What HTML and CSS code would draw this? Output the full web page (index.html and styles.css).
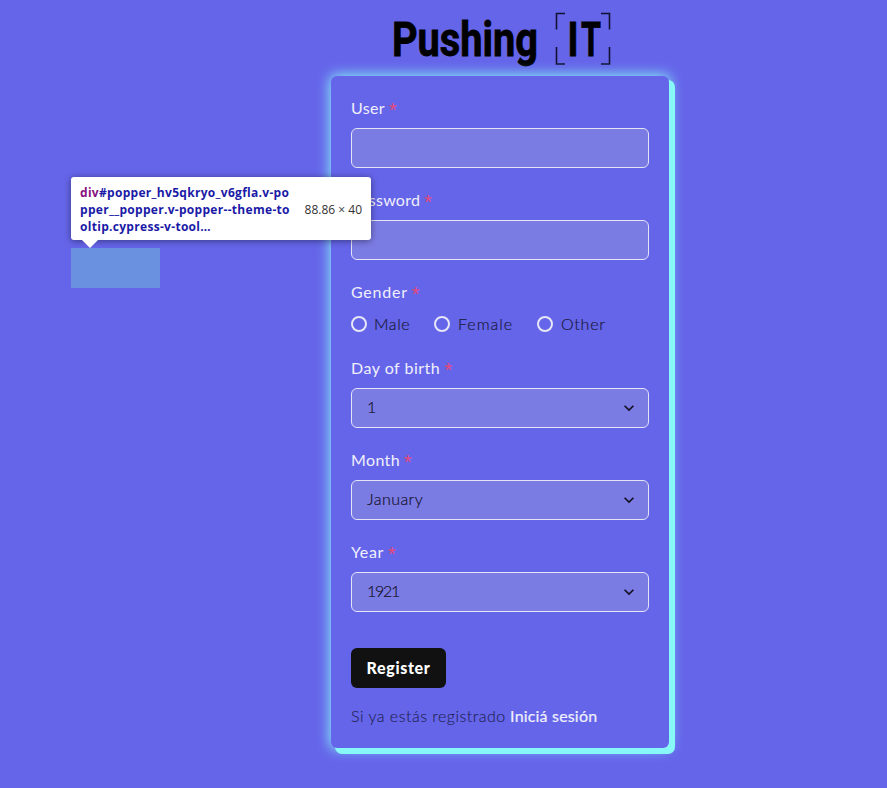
FILE: index.html
```html
<!DOCTYPE html>
<html lang="en">
<head>
<meta charset="utf-8">
<title>Pushing IT</title>
<link rel="stylesheet" href="styles.css">
</head>
<body>
<main class="page">
  <svg class="logo" width="222" height="60" viewBox="0 0 222 60" aria-label="Pushing IT">
    <text class="logo-text" x="3" y="48.500" textLength="146" lengthAdjust="spacingAndGlyphs">Pushing</text>
    <text class="logo-text" x="178.500" y="48.500" textLength="11" lengthAdjust="spacingAndGlyphs">I</text>
    <text class="logo-text" x="192" y="48.500" textLength="20" lengthAdjust="spacingAndGlyphs">T</text>
    <path class="bracket" d="M176 6.500h-8.500v16M212 6.500h8.500v16M167.500 40v17h8.500M220.500 40v17h-8.500"/>
  </svg>
  <form class="card">
    <div class="field">
      <label class="label"><span class="w-user">User</span> <i class="star">*</i></label>
      <div class="control"></div>
    </div>
    <div class="field">
      <label class="label"><span class="w-password">Password</span> <i class="star">*</i></label>
      <div class="control"></div>
    </div>
    <div class="field">
      <label class="label"><span class="w-gender">Gender</span> <i class="star">*</i></label>
      <div class="radios">
        <label class="radio male"><span class="dot"></span><span>Male</span></label>
        <label class="radio female"><span class="dot"></span><span>Female</span></label>
        <label class="radio other"><span class="dot"></span><span>Other</span></label>
      </div>
    </div>
    <div class="field">
      <label class="label"><span class="w-day">Day of birth</span> <i class="star">*</i></label>
      <div class="control"><span>1</span><svg class="chevron" width="20" height="20" viewBox="0 0 24 24"><path d="M16.590 8.590L12 13.170 7.410 8.590 6 10l6 6 6-6z"/></svg></div>
    </div>
    <div class="field">
      <label class="label"><span class="w-month">Month</span> <i class="star">*</i></label>
      <div class="control"><span class="w-january">January</span><svg class="chevron" width="20" height="20" viewBox="0 0 24 24"><path d="M16.590 8.590L12 13.170 7.410 8.590 6 10l6 6 6-6z"/></svg></div>
    </div>
    <div class="field">
      <label class="label"><span class="w-year">Year</span> <i class="star">*</i></label>
      <div class="control"><span class="w-1921">1921</span><svg class="chevron" width="20" height="20" viewBox="0 0 24 24"><path d="M16.590 8.590L12 13.170 7.410 8.590 6 10l6 6 6-6z"/></svg></div>
    </div>
    <button class="submit" type="button">Register</button>
    <p class="signin"><span class="hint">Si ya estás registrado</span> <a class="link">Iniciá sesión</a></p>
  </form>
</main>
<div class="highlight"></div>
<div class="tooltip">
  <div class="selector"><span class="tag">div</span>#popper_hv5qkryo_v6gfla.v-po<br>pper__popper.v-popper--theme-to<br>oltip.cypress-v-tool…</div>
  <div class="size">88.86 × 40</div>
</div>
</body>
</html>
```
FILE: styles.css
```css
* { box-sizing: border-box; }
body {
  margin: 0;
  height: 788px;
  overflow: hidden;
  background: #6565ea;
  color: #1a1a3c;
  font: 300 16px/24px Lato, sans-serif;
}
.page {
  display: flex;
  flex-direction: column;
  align-items: center;
  width: 338px;
  margin-left: 331px;
  padding-top: 7px;
}
.logo { display: block; margin-bottom: 9px; }
.logo-text {
  font: 700 48px Roboto, sans-serif;
  fill: #000;
  stroke: #000;
  stroke-width: .8;
}
.bracket { fill: none; stroke: #111130; stroke-width: 1.6; }
.card {
  width: 338px;
  height: 672px;
  padding: 20px;
  border-radius: 6px;
  background: #6565ea;
  box-shadow: 5px 5px 0 1px #88f7f7, 0 0 13px 1px #88f7f7;
}
.field { margin-bottom: 20px; }
.label {
  display: block;
  height: 24px;
  margin-bottom: 8px;
  color: #f0f0fa;
  font-weight: 400;
  white-space: nowrap;
}
.star {
  color: #e5487a;
  font: 400 20px/16px "Liberation Sans", sans-serif;
  display: inline-block;
  vertical-align: -3px;
}
.w-user { letter-spacing: .3px; }
.w-password { letter-spacing: .25px; }
.w-gender { letter-spacing: .75px; }
.w-day { letter-spacing: .5px; }
.w-month { letter-spacing: .35px; }
.w-year { letter-spacing: .6px; }
.w-january { letter-spacing: .45px; }
.w-1921 { letter-spacing: -1.3px; }
.control {
  display: flex;
  align-items: center;
  justify-content: space-between;
  height: 40px;
  padding: 0 9px 2px 15px;
  border: 1px solid #e4e4f4;
  border-radius: 6px;
  background: #7b7be4;
  color: #101020;
}
.control > span, .radio > span { -webkit-text-stroke: .2px #1a1a3c; }
.chevron { fill: #101020; position: relative; top: 1px; }
.radios { display: flex; height: 24px; }
.radio { display: flex; align-items: center; gap: 8px; }
.dot {
  width: 16px;
  height: 16px;
  border: 2px solid #e6e6f6;
  border-radius: 50%;
}
.male { width: 83px; gap: 7px; letter-spacing: .6px; }
.female { width: 103px; letter-spacing: 1px; }
.other { letter-spacing: .75px; }
.submit {
  display: block;
  width: 95px;
  height: 40px;
  margin-top: 36px;
  padding: 0;
  border: 0;
  border-radius: 6px;
  background: #111;
  color: #fff;
  font: 900 16px/24px Lato, sans-serif;
  letter-spacing: .65px;
}
.signin { margin: 16px 0 0; white-space: nowrap; }
.hint { color: #202050; letter-spacing: .49px; -webkit-text-stroke: .1px #202050; }
.link { color: #f0f0fa; font-weight: 400; letter-spacing: .18px; -webkit-text-stroke: .2px #f0f0fa; }
.highlight {
  position: absolute;
  left: 71px;
  top: 248px;
  width: 89px;
  height: 40px;
  background: #6a90e0;
}
.tooltip {
  position: absolute;
  left: 71px;
  top: 177px;
  display: flex;
  align-items: center;
  justify-content: space-between;
  width: 300px;
  height: 63px;
  padding: 1px 9px 0;
  border-radius: 3px;
  background: #fff;
  box-shadow: 0 1px 7px rgba(0, 0, 0, .45);
  font: 12px/17px "Open Sans", sans-serif;
  white-space: nowrap;
}
.tooltip::after {
  content: "";
  position: absolute;
  left: 11px;
  top: 63px;
  border: 8px solid transparent;
  border-top-color: #fff;
  border-bottom: 0;
}
.selector { color: #1a1aa6; font-weight: 700; letter-spacing: .3px; }
.tag { color: #881280; }
.size { color: #333; }
```
